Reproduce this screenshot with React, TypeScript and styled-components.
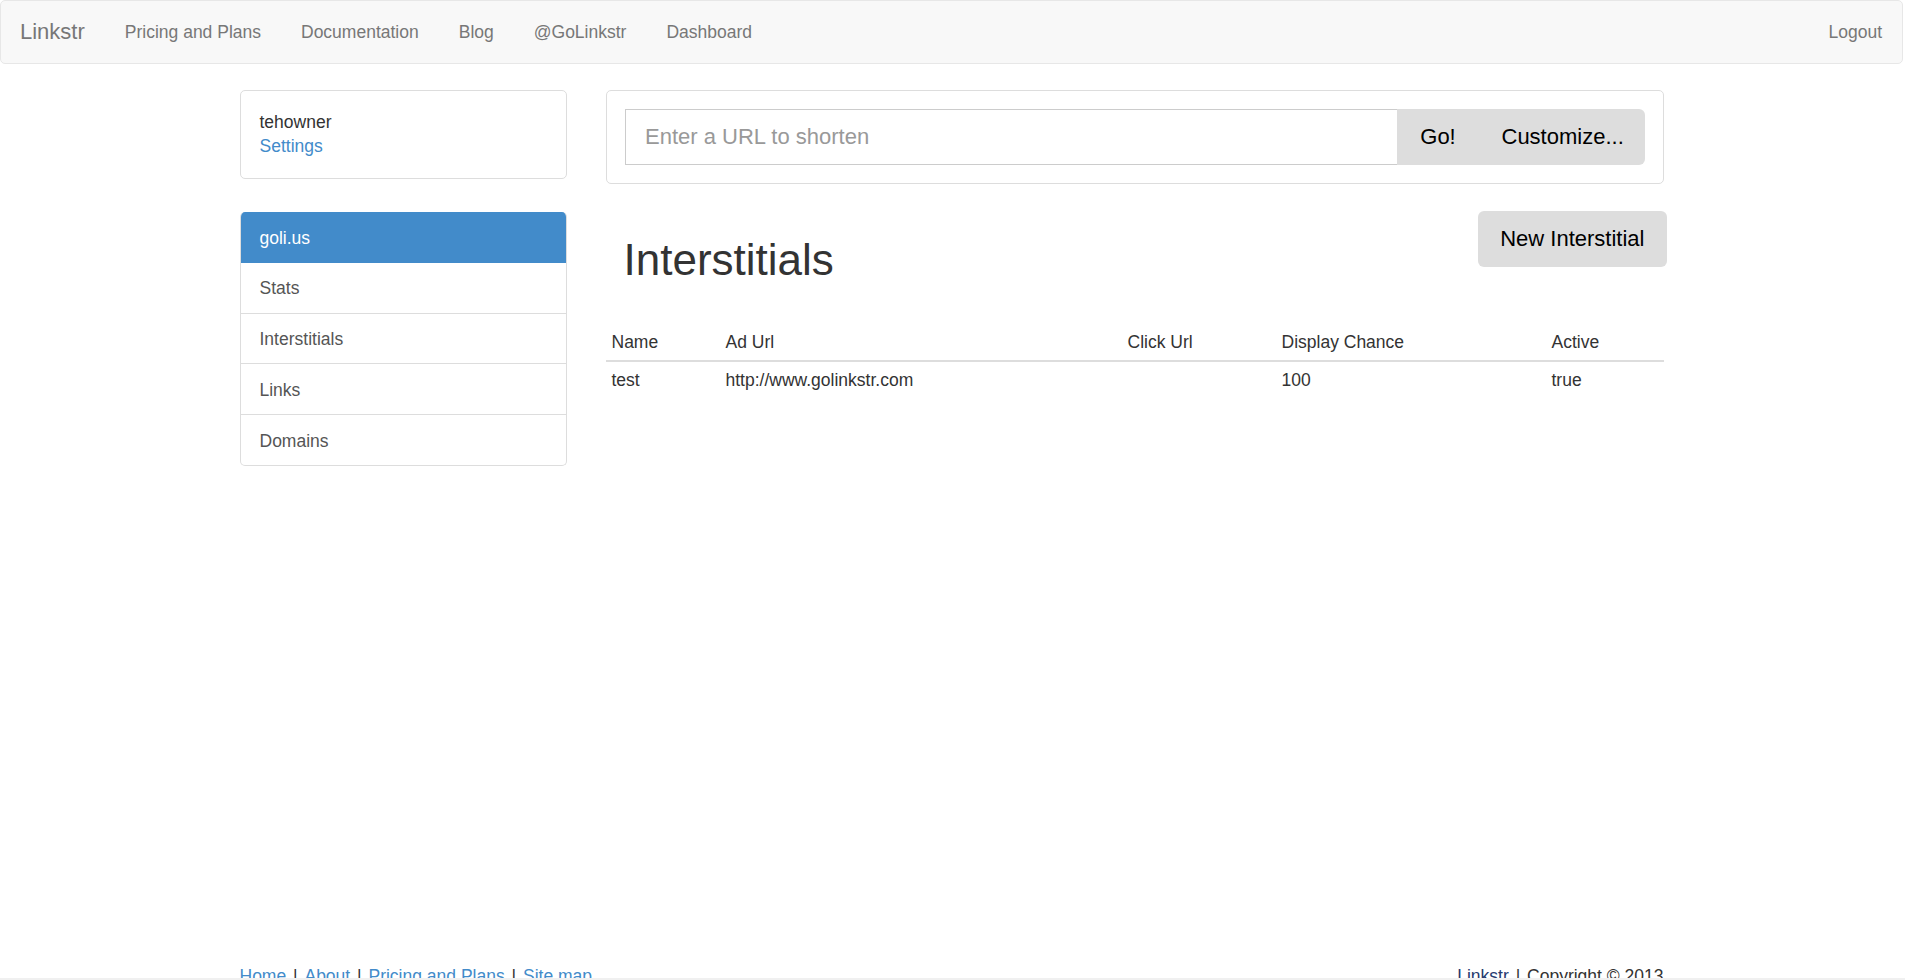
import { createGlobalStyle, styled } from "styled-components";

const GlobalStyle = createGlobalStyle`
  html, body {
    margin: 0;
    padding: 0;
    background: #fff;
  }
  body {
    font-family: "Liberation Sans", Arial, sans-serif;
    font-size: 17.5px;
    line-height: 24.3px;
    color: #333;
  }
  * {
    box-sizing: border-box;
  }
`;

const Page = styled.div`
  height: 100vh;
  display: flex;
  flex-direction: column;
  overflow: hidden;
`;

const Navbar = styled.nav`
  flex: none;
  height: 64px;
  margin-right: 2px;
  display: flex;
  align-items: center;
  padding: 0 0 0 1px;
  background: #f8f8f8;
  border: 1px solid #e7e7e7;
  border-radius: 5px;
`;

const Brand = styled.a`
  padding: 0 20px 0 18px;
  font-size: 22px;
  color: #777;
  text-decoration: none;
`;

const NavLink = styled.a`
  padding: 0 20px;
  color: #777;
  text-decoration: none;
`;

const NavRight = styled.div`
  margin-left: auto;
  display: flex;
`;

const Container = styled.div`
  flex: 1;
  width: 1424px;
  margin-left: calc((100% - 1424px) / 2 - 1px);
  padding-top: 26px;
  display: grid;
  grid-template-columns: 327px 1fr;
  column-gap: 39px;
  align-items: start;
`;

const Sidebar = styled.aside`
  display: flex;
  flex-direction: column;
`;

const UserBox = styled.div`
  border: 1px solid #ddd;
  border-radius: 5px;
  padding: 19px;
  margin-bottom: 33px;
  display: flex;
  flex-direction: column;
`;

const UserName = styled.span`
  color: #333;
`;

const Link = styled.a`
  color: #428bca;
  text-decoration: none;
`;

const ListGroup = styled.div`
  display: flex;
  flex-direction: column;
  border: 1px solid #ddd;
  border-top: none;
  border-radius: 5px;
  overflow: hidden;
`;

const ListHeader = styled.div`
  padding: 14px 19px 13px;
  background: #428bca;
  color: #fff;
`;

const ListItem = styled.a`
  padding: 13.5px 19px 12px;
  color: #555;
  text-decoration: none;
  & + & {
    border-top: 1px solid #ddd;
  }
`;

const Main = styled.main`
  display: flex;
  flex-direction: column;
`;

const ShortenBox = styled.div`
  border: 1px solid #ddd;
  border-radius: 5px;
  padding: 18px;
  display: flex;
`;

const UrlInput = styled.input`
  flex: 1;
  height: 56px;
  padding: 0 19.5px;
  border: 1px solid #ccc;
  border-right: none;
  border-radius: 0;
  font-family: inherit;
  font-size: 22px;
  color: #555;
  outline: none;
  &::placeholder {
    color: #999;
  }
`;

const GreyButton = styled.button<{ $width?: number; $radius?: string }>`
  height: 56px;
  width: ${(p) => (p.$width ? `${p.$width}px` : "auto")};
  padding: 0 22px;
  border: none;
  border-radius: ${(p) => p.$radius || "6px"};
  background: #ddd;
  color: #000;
  font-family: inherit;
  font-size: 22px;
  text-align: center;
  cursor: pointer;
  white-space: nowrap;
`;

const PageHeader = styled.div`
  margin-top: 27px;
  display: flex;
  justify-content: space-between;
  align-items: flex-start;
  margin-right: -3px;
`;

const Title = styled.h1`
  margin: 24.5px 0 0;
  padding-left: 18px;
  font-size: 44px;
  font-weight: 400;
  line-height: 48.4px;
  color: #333;
`;

const Table = styled.table`
  margin-top: 40px;
  width: 100%;
  table-layout: fixed;
  border-collapse: collapse;
`;

const Th = styled.th`
  padding: 6px;
  text-align: left;
  font-weight: 400;
  color: #333;
  border-bottom: 2px solid #ddd;
`;

const Td = styled.td`
  padding: 6px;
  color: #333;
`;

const FooterClip = styled.footer`
  flex: none;
  height: 14px;
  overflow: hidden;
`;

const FooterInner = styled.div`
  width: 1424px;
  margin-left: calc((100% - 1424px) / 2 - 1px);
  display: flex;
  justify-content: space-between;
`;

const Sep = styled.span`
  color: #333;
  padding: 0 2px;
`;

const BrandLink = styled.a`
  color: #263a6e;
  text-decoration: none;
`;

const Copy = styled.span`
  color: #333;
`;

const BottomStrip = styled.div`
  flex: none;
  height: 2px;
  background: #f0f0f0;
`;

const navLinks = ["Pricing and Plans", "Documentation", "Blog", "@GoLinkstr", "Dashboard"];
const sideLinks = ["Stats", "Interstitials", "Links", "Domains"];
const columns = [
  { label: "Name", width: 114 },
  { label: "Ad Url", width: 402 },
  { label: "Click Url", width: 154 },
  { label: "Display Chance", width: 270 },
  { label: "Active", width: 118 },
];
const rows = [["test", "http://www.golinkstr.com", "", "100", "true"]];
const footerLinks = ["Home", "About", "Pricing and Plans", "Site map"];

export default function App() {
  return (
    <>
      <GlobalStyle />
      <Page>
        <Navbar>
          <Brand href="#">Linkstr</Brand>
          {navLinks.map((l) => (
            <NavLink key={l} href="#">
              {l}
            </NavLink>
          ))}
          <NavRight>
            <NavLink href="#">Logout</NavLink>
          </NavRight>
        </Navbar>

        <Container>
          <Sidebar>
            <UserBox>
              <UserName>tehowner</UserName>
              <Link href="#">Settings</Link>
            </UserBox>
            <ListGroup>
              <ListHeader>goli.us</ListHeader>
              {sideLinks.map((l) => (
                <ListItem key={l} href="#">
                  {l}
                </ListItem>
              ))}
            </ListGroup>
          </Sidebar>

          <Main>
            <ShortenBox>
              <UrlInput placeholder="Enter a URL to shorten" />
              <GreyButton $width={83} $radius="0">
                Go!
              </GreyButton>
              <GreyButton $width={165} $radius="0 6px 6px 0">
                Customize...
              </GreyButton>
            </ShortenBox>

            <PageHeader>
              <Title>Interstitials</Title>
              <GreyButton>New Interstitial</GreyButton>
            </PageHeader>

            <Table>
              <colgroup>
                {columns.map((c) => (
                  <col key={c.label} style={{ width: c.width }} />
                ))}
              </colgroup>
              <thead>
                <tr>
                  {columns.map((c) => (
                    <Th key={c.label}>{c.label}</Th>
                  ))}
                </tr>
              </thead>
              <tbody>
                {rows.map((r, i) => (
                  <tr key={i}>
                    {r.map((cell, j) => (
                      <Td key={j}>{cell}</Td>
                    ))}
                  </tr>
                ))}
              </tbody>
            </Table>
          </Main>
        </Container>

        <FooterClip>
          <FooterInner>
            <div>
              {footerLinks.map((l, i) => (
                <span key={l}>
                  {i > 0 && <Sep> | </Sep>}
                  <Link href="#">{l}</Link>
                </span>
              ))}
            </div>
            <div>
              <BrandLink href="#">Linkstr</BrandLink>
              <Sep> | </Sep>
              <Copy>Copyright © 2013</Copy>
            </div>
          </FooterInner>
        </FooterClip>
        <BottomStrip />
      </Page>
    </>
  );
}
